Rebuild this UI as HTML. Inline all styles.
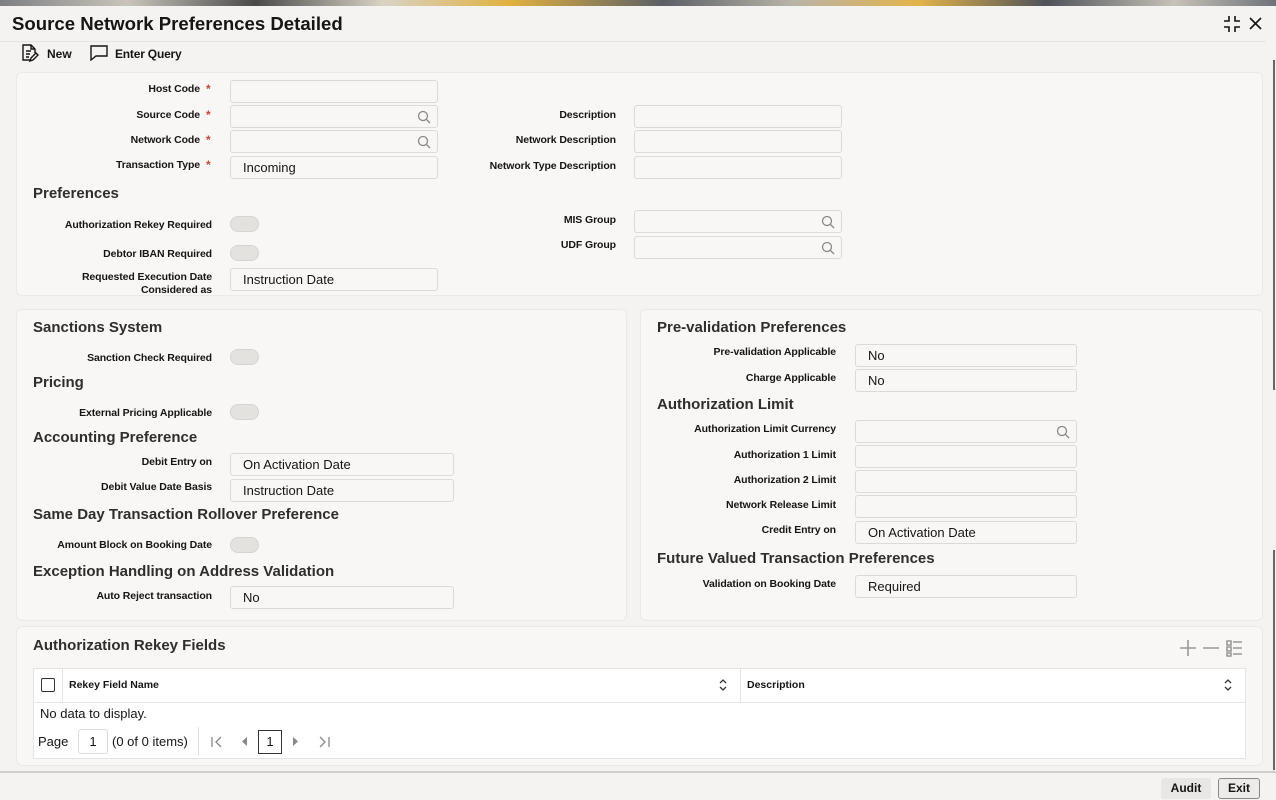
<!DOCTYPE html>
<html><head><meta charset="utf-8"><style>
*{box-sizing:border-box;margin:0;padding:0}
body{width:1276px;height:800px;overflow:hidden;background:#f4f3f1;font-family:"Liberation Sans",sans-serif;color:#161513;position:relative}
.a{position:absolute}
.pn{position:absolute;background:#f8f7f6;border:1px solid #ebe9e6;border-radius:6px}
.l{position:absolute;font-size:10.5px;font-weight:bold;text-align:right;white-space:nowrap;line-height:13px;margin-top:1px;letter-spacing:-0.1px}
.st{color:#c74634;position:absolute;font-size:12px;font-weight:bold}
.i{position:absolute;height:23px;background:#f8f7f6;border:1px solid #dcdad6;border-radius:3px;font-size:13px;padding-left:12px;line-height:22px;color:#161513}
.i svg{position:absolute;right:6px;top:4px}
.t{position:absolute;width:29px;height:16px;border-radius:8px;background:#e4e2df;border:1px solid #d6d4d0}
.h{position:absolute;font-size:15px;font-weight:bold;color:#312d2a;white-space:nowrap;margin-top:2px}
</style></head><body>
<div class="a" style="left:0;top:0;width:1276px;height:6px;background:linear-gradient(90deg,#7d7f83,#c9c5bb 10%,#4a4a4a 20%,#d9d3c5 30%,#e0b13f 40%,#5b5f66 52%,#b8b3a8 62%,#e3b34a 72%,#4e5259 82%,#c7c2b8 92%,#6e7278)"></div>
<div class="a" style="left:12px;top:13px;font-size:18.6px;font-weight:bold;color:#161513">Source Network Preferences Detailed</div>
<svg class="a" style="left:1222px;top:15px" width="20" height="18" viewBox="0 0 20 18" fill="none" stroke="#161513" stroke-width="1.6"><path d="M7 1v5H2M13 1v5h5M7 17v-5H2M13 17v-5h5"/></svg>
<svg class="a" style="left:1249px;top:17px" width="13" height="13" viewBox="0 0 13 13" stroke="#161513" stroke-width="1.6"><path d="M1 1l11 11M12 1L1 12"/></svg>
<div class="a" style="left:0;top:41px;width:1266px;height:1px;background:#e6e4e1"></div>
<svg class="a" style="left:21px;top:44px" width="18" height="18" viewBox="0 0 18 18" fill="none" stroke="#161513" stroke-width="1.4"><path d="M10 16H2V1h8l4 4v4M10 1v4h4M5 7h5M5 10h4M5 13h3M9 17l1-3 5-5 2 2-5 5z"/></svg>
<div class="a" style="left:47px;top:47px;font-size:12px;font-weight:bold">New</div>
<svg class="a" style="left:90px;top:45px" width="18" height="16" viewBox="0 0 18 16" fill="none" stroke="#161513" stroke-width="1.4"><path d="M1 1h16v10H6l-5 4z"/></svg>
<div class="a" style="left:115px;top:47px;font-size:12px;font-weight:bold;letter-spacing:-0.2px">Enter Query</div>

<div class="pn" style="left:16px;top:72px;width:1247px;height:224px"></div>
<div class="pn" style="left:16px;top:309px;width:611px;height:312px"></div>
<div class="pn" style="left:640px;top:309px;width:623px;height:312px"></div>
<div class="pn" style="left:16px;top:626px;width:1247px;height:140px"></div>
<div class="a" style="left:1273px;top:60px;width:2px;height:330px;background:#666"></div>
<div class="a" style="left:1273px;top:550px;width:2px;height:220px;background:#666"></div>

<div class="l" style="right:1076px;top:82px">Host Code</div><div class="st" style="left:206px;top:82px">*</div>
<div class="i" style="left:230px;top:80px;width:208px"></div>
<div class="l" style="right:1076px;top:108px">Source Code</div><div class="st" style="left:206px;top:108px">*</div>
<div class="i" style="left:230px;top:105px;width:208px"><svg width="14" height="14" viewBox="0 0 14 14" fill="none" stroke="#8a8886" stroke-width="1.3"><circle cx="6" cy="6" r="4.5"/><path d="M9.3 9.3L13 13"/></svg></div>
<div class="l" style="right:1076px;top:133px">Network Code</div><div class="st" style="left:206px;top:133px">*</div>
<div class="i" style="left:230px;top:130px;width:208px"><svg width="14" height="14" viewBox="0 0 14 14" fill="none" stroke="#8a8886" stroke-width="1.3"><circle cx="6" cy="6" r="4.5"/><path d="M9.3 9.3L13 13"/></svg></div>
<div class="l" style="right:1076px;top:158px">Transaction Type</div><div class="st" style="left:206px;top:158px">*</div>
<div class="i" style="left:230px;top:156px;width:208px">Incoming</div>

<div class="l" style="right:660px;top:108px">Description</div>
<div class="i" style="left:634px;top:105px;width:208px"></div>
<div class="l" style="right:660px;top:133px">Network Description</div>
<div class="i" style="left:634px;top:130px;width:208px"></div>
<div class="l" style="right:660px;top:159px">Network Type Description</div>
<div class="i" style="left:634px;top:156px;width:208px"></div>

<div class="h" style="left:33px;top:183px">Preferences</div>
<div class="l" style="right:1064px;top:218px">Authorization Rekey Required</div>
<div class="t" style="left:230px;top:216px"></div>
<div class="l" style="right:1064px;top:247px">Debtor IBAN Required</div>
<div class="t" style="left:230px;top:245px"></div>
<div class="l" style="right:1064px;top:270px">Requested Execution Date<br>Considered as</div>
<div class="i" style="left:230px;top:268px;width:208px">Instruction Date</div>
<div class="l" style="right:660px;top:213px">MIS Group</div>
<div class="i" style="left:634px;top:210px;width:208px"><svg width="14" height="14" viewBox="0 0 14 14" fill="none" stroke="#8a8886" stroke-width="1.3"><circle cx="6" cy="6" r="4.5"/><path d="M9.3 9.3L13 13"/></svg></div>
<div class="l" style="right:660px;top:238px">UDF Group</div>
<div class="i" style="left:634px;top:236px;width:208px"><svg width="14" height="14" viewBox="0 0 14 14" fill="none" stroke="#8a8886" stroke-width="1.3"><circle cx="6" cy="6" r="4.5"/><path d="M9.3 9.3L13 13"/></svg></div>

<div class="h" style="left:33px;top:317px">Sanctions System</div>
<div class="l" style="right:1064px;top:351px">Sanction Check Required</div>
<div class="t" style="left:230px;top:349px"></div>
<div class="h" style="left:33px;top:372px">Pricing</div>
<div class="l" style="right:1064px;top:406px">External Pricing Applicable</div>
<div class="t" style="left:230px;top:404px"></div>
<div class="h" style="left:33px;top:427px">Accounting Preference</div>
<div class="l" style="right:1064px;top:455px">Debit Entry on</div>
<div class="i" style="left:230px;top:453px;width:224px">On Activation Date</div>
<div class="l" style="right:1064px;top:480px">Debit Value Date Basis</div>
<div class="i" style="left:230px;top:479px;width:224px">Instruction Date</div>
<div class="h" style="left:33px;top:504px">Same Day Transaction Rollover Preference</div>
<div class="l" style="right:1064px;top:538px">Amount Block on Booking Date</div>
<div class="t" style="left:230px;top:537px"></div>
<div class="h" style="left:33px;top:561px">Exception Handling on Address Validation</div>
<div class="l" style="right:1064px;top:589px">Auto Reject transaction</div>
<div class="i" style="left:230px;top:586px;width:224px">No</div>

<div class="h" style="left:657px;top:317px">Pre-validation Preferences</div>
<div class="l" style="right:440px;top:345px">Pre-validation Applicable</div>
<div class="i" style="left:855px;top:344px;width:222px">No</div>
<div class="l" style="right:440px;top:371px">Charge Applicable</div>
<div class="i" style="left:855px;top:369px;width:222px">No</div>
<div class="h" style="left:657px;top:394px">Authorization Limit</div>
<div class="l" style="right:440px;top:422px">Authorization Limit Currency</div>
<div class="i" style="left:855px;top:420px;width:222px"><svg width="14" height="14" viewBox="0 0 14 14" fill="none" stroke="#8a8886" stroke-width="1.3"><circle cx="6" cy="6" r="4.5"/><path d="M9.3 9.3L13 13"/></svg></div>
<div class="l" style="right:440px;top:448px">Authorization 1 Limit</div>
<div class="i" style="left:855px;top:445px;width:222px"></div>
<div class="l" style="right:440px;top:473px">Authorization 2 Limit</div>
<div class="i" style="left:855px;top:470px;width:222px"></div>
<div class="l" style="right:440px;top:498px">Network Release Limit</div>
<div class="i" style="left:855px;top:495px;width:222px"></div>
<div class="l" style="right:440px;top:523px">Credit Entry on</div>
<div class="i" style="left:855px;top:521px;width:222px">On Activation Date</div>
<div class="h" style="left:657px;top:548px">Future Valued Transaction Preferences</div>
<div class="l" style="right:440px;top:577px">Validation on Booking Date</div>
<div class="i" style="left:855px;top:575px;width:222px">Required</div>

<div class="h" style="left:33px;top:635px">Authorization Rekey Fields</div>
<svg class="a" style="left:1178px;top:639px" width="66" height="18" viewBox="0 0 66 18" fill="none" stroke="#9a9895" stroke-width="1.6"><path d="M10 1v16M2 9h16M25 9h16M49 2h4v4h-4zM49 8h4v4h-4zM49 14h4v3h-4zM55 3h9M55 9h9M55 15h9"/></svg>
<div class="a" style="left:33px;top:668px;width:1213px;height:91px;background:#fff;border:1px solid #e6e4e1"></div>
<div class="a" style="left:33px;top:702px;width:1213px;height:1px;background:#e6e4e1"></div>
<div class="a" style="left:62px;top:668px;width:1px;height:34px;background:#e6e4e1"></div>
<div class="a" style="left:740px;top:668px;width:1px;height:34px;background:#e6e4e1"></div>
<div class="a" style="left:41px;top:678px;width:14px;height:14px;border:1.5px solid #333;border-radius:2px"></div>
<div class="a" style="left:69px;top:679px;font-size:10.5px;font-weight:bold">Rekey Field Name</div>
<div class="a" style="left:747px;top:679px;font-size:10.5px;font-weight:bold">Description</div>
<svg class="a" style="left:719px;top:679px" width="8" height="12" viewBox="0 0 8 12" fill="none" stroke="#333" stroke-width="1.3"><path d="M1 4l3-3 3 3M1 8l3 3 3-3"/></svg>
<svg class="a" style="left:1224px;top:679px" width="8" height="12" viewBox="0 0 8 12" fill="none" stroke="#333" stroke-width="1.3"><path d="M1 4l3-3 3 3M1 8l3 3 3-3"/></svg>
<div class="a" style="left:40px;top:706px;font-size:13px">No data to display.</div>
<div class="a" style="left:38px;top:734px;font-size:13px">Page</div>
<div class="a" style="left:78px;top:729px;width:30px;height:25px;border:1px solid #ddd;border-radius:3px;font-size:13px;text-align:center;line-height:24px">1</div>
<div class="a" style="left:112px;top:734px;font-size:13px">(0 of 0 items)</div>
<div class="a" style="left:198px;top:727px;width:1px;height:28px;background:#e0e0e0"></div>
<svg class="a" style="left:211px;top:736px" width="12" height="12" viewBox="0 0 12 12" fill="none" stroke="#888" stroke-width="1.3"><path d="M1 1v10M10 1L5 6l5 5"/></svg>
<svg class="a" style="left:242px;top:737px" width="6" height="9" viewBox="0 0 6 9"><path d="M5 0v9L0 4.5z" fill="#888"/></svg>
<div class="a" style="left:258px;top:730px;width:24px;height:24px;border:1px solid #333;font-size:13px;text-align:center;line-height:22px">1</div>
<svg class="a" style="left:293px;top:737px" width="6" height="9" viewBox="0 0 6 9"><path d="M0 0v9l5-4.5z" fill="#888"/></svg>
<svg class="a" style="left:318px;top:736px" width="12" height="12" viewBox="0 0 12 12" fill="none" stroke="#888" stroke-width="1.3"><path d="M2 1l5 5-5 5M11 1v10"/></svg>

<div class="a" style="left:0;top:771px;width:1276px;height:2px;background:#cfcdca"></div>
<div class="a" style="left:1161px;top:778px;width:50px;height:21px;background:#e8e7e5;border-radius:3px;font-size:12px;font-weight:bold;text-align:center;line-height:21px">Audit</div>
<div class="a" style="left:1218px;top:778px;width:42px;height:21px;background:#ecebea;border:1px solid #8a8886;border-radius:3px;font-size:12px;font-weight:bold;text-align:center;line-height:19px">Exit</div>
</body></html>
